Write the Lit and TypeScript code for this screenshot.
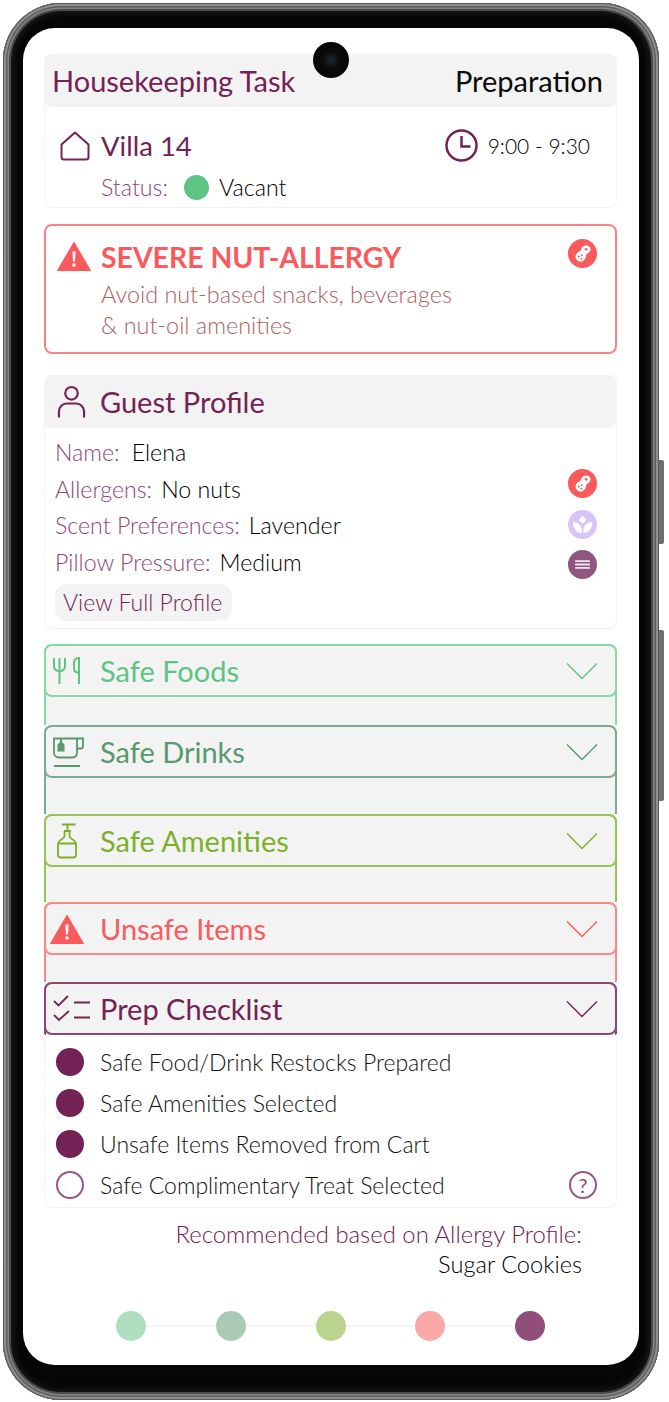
import { LitElement, html, css } from "lit";
import { customElement } from "lit/decorators.js";

const nut = (bg: string) => html`<svg class="badge" viewBox="0 0 28 28"><circle cx="14" cy="14" r="14" fill="${bg}"/><path d="M17.800 6.200c2.400 0 4 1.800 4 3.800 0 2.300-1.800 3.500-3.300 4.300-.9.500-1 1.200-1.200 2.400-.4 2.600-2 5.100-5 5.100-2.800 0-5-2.200-5-4.900 0-2.700 1.900-4.100 3.600-4.900 1.100-.5 1.600-1.200 2-2.500.6-1.900 2.400-3.300 4.900-3.300z" fill="#fff"/><circle cx="17.500" cy="10" r="1.300" fill="${bg}"/><circle cx="10.500" cy="17" r="1" fill="${bg}"/><circle cx="13" cy="19" r=".9" fill="${bg}"/><circle cx="13.300" cy="15.600" r=".9" fill="${bg}"/></svg>`;
const leaf = html`<svg class="badge" viewBox="0 0 28 28"><circle cx="14" cy="14" r="14" fill="#d8c5f7"/><path d="M13.200 22.500C8 22 4.500 17.500 4.800 11.300c3.200.3 5.800 1.600 7.300 3.800 1.300 2 1.700 4.800 1.100 7.400zM15 22.500c-.6-2.600-.2-5.400 1.100-7.400 1.500-2.200 4.100-3.500 7.300-3.800.3 6.200-3.200 10.700-8.400 11.200zM14.100 13.300c-.8-1.200-1.900-2.200-3.300-3 .4-1.700 1.500-3.200 3.300-4.700 1.800 1.500 2.900 3 3.300 4.700-1.400.8-2.500 1.800-3.300 3z" fill="#fff"/></svg>`;
const pressure = html`<svg class="badge" viewBox="0 0 28 28"><circle cx="14" cy="14" r="14" fill="#91567f"/><path d="M7.500 10.700h13M7.500 14h13M7.500 17.300h13" stroke="#f1e6ee" stroke-width="1.700" stroke-linecap="round"/></svg>`;
const warn = html`<svg class="warn" width="34" height="30" viewBox="0 0 34 30"><path d="M17 1.500 33.300 29.500H.7z" fill="#fa5a5c" stroke="#fa5a5c" stroke-width="1.200" stroke-linejoin="round"/><path d="M15.400 10.500h3.200l-.6 10h-2z" fill="#fff"/><circle cx="17" cy="24" r="1.800" fill="#fff"/></svg>`;
const chevron = (c: string) => html`<svg viewBox="0 0 32 18" width="32" height="18"><path d="M1 1.500 16 16.500 31 1.500" fill="none" stroke="${c}" stroke-width="1.400"/></svg>`;

const icons = {
  food: html`<svg width="27" height="28" viewBox="0 0 27 28" fill="none" stroke="#5ec484" stroke-width="2"><path d="M1 1v8c0 3 2 5 5.500 5S12 12 12 9V1M6.500 1v26M26 0v27M26 1c-3 0-5 2-5 5v6c0 2 1.500 3.500 5 3.500"/></svg>`,
  drink: html`<svg width="31" height="30" viewBox="0 0 31 30" fill="none" stroke="#569a6d" stroke-width="1.800"><path d="M1 1.500h23v14c0 3-2 5-5 5H6c-3 0-5-2-5-5zM24 1.500h6v8c0 1-1 2-2 2h-4M1 29h26"/><path d="M7 2v3L4.500 7.500v7h7v-7L9 5V2z" fill="#569a6d" stroke="none"/></svg>`,
  pump: html`<svg width="20" height="36" viewBox="0 0 20 36" fill="none" stroke="#7cb02b" stroke-width="1.800"><path d="M5 1.500h13.500M10.500 1.500V8M7 8h7M7.500 8v5c0 1.500-1 2-2.500 3-2.500 1.500-4 3-4 5.500V32c0 1.500 1 2.500 2.500 2.500h13c1.500 0 2.500-1 2.500-2.500V21.500c0-2.500-1.500-4-4-5.500-1.500-1-2.500-1.500-2.500-3V8M1 20.500h18"/></svg>`,
  check: html`<svg width="38" height="28" viewBox="0 0 38 28" fill="none" stroke="#732255" stroke-width="1.800"><path d="M1 6 5.500 10.500 15 1M1 20 6 25 16 16M21 7.500h16M21 22.500h16"/></svg>`,
};

@customElement("app-root")
export class AppRoot extends LitElement {
  static styles = css`
    :host { display: block; width: 669px; height: 1402px; background: #fff; font-family: "Lato", "Liberation Sans", sans-serif; overflow: hidden; }
    .device { display: flex; align-items: flex-start; padding: 3px 0 0 3px; }
    .phone { position: relative; width: 656px; height: 1397px; box-sizing: border-box; border-radius: 58px; background: #060606; padding: 25px 20px 35px 20px;
      box-shadow: inset 0 0 0 1px #5a5a5a, inset 0 0 0 3px #8f8f8f, inset 0 0 0 4.500px #5e5e5e, inset 0 0 0 6px #858585, inset 0 0 0 8px #4a4a4a, inset 0 0 6px 10px #1c1c1c; }
    .camera { position: absolute; left: 310px; top: 39px; width: 36px; height: 36px; border-radius: 50%; background: radial-gradient(circle, #1a2a30 0, #0a0a0b 35%, #050505 100%); }
    .rails { display: flex; flex-direction: column; width: 6px; }
    .rail { width: 5px; background: #6d6d6d; border-radius: 0 2px 2px 0; }
    .rail.a { height: 84px; margin-top: 457px; }
    .rail.b { height: 171px; margin-top: 86px; }
    .screen { height: 100%; box-sizing: border-box; background: #fff; border-radius: 32px; padding: 26px 22px 0 21px; width: 616px; overflow: hidden; }

    .card { display: block; border: 1px solid #f3f3f3; border-radius: 8px; box-sizing: border-box; }
    .head { background: #f3f3f3; border-radius: 8px; height: 53px; display: flex; align-items: center; justify-content: space-between; padding: 0 14px 0 8px; margin: -1px; font-size: 29px; }
    .head .t { color: #732255; }
    .head .r { color: #0b0b0b; }

    .villa { height: 101px; box-sizing: border-box; padding: 23px 26px 0 15px; }
    .villa-top { display: flex; justify-content: space-between; align-items: center; }
    .vl { display: flex; align-items: center; gap: 11px; font-size: 27.500px; color: #732255; }
    .vr { display: flex; align-items: center; gap: 10px; font-size: 21px; color: #000; font-weight: 300; }
    .status { display: flex; align-items: center; margin: 11px 0 0 41px; font-size: 23.200px; }
    .lab { color: #8f4676; font-weight: 300; }
    .val { color: #000; font-weight: 300; }
    .status .lab { margin-right: 16px; }
    .dot { width: 25px; height: 25px; border-radius: 50%; background: #5ec484; margin-right: 10px; }

    .alert { margin-top: 16px; height: 130px; box-sizing: border-box; border: 2px solid #fb8283; border-radius: 8px; padding: 12px 18px 0 11px; display: flex; justify-content: space-between; align-items: flex-start; }
    .a-main { display: flex; gap: 10px; }
    .a-main .warn { margin-top: 3px; }
    .a-title { font-size: 28.400px; font-weight: 700; color: #fa5a5c; line-height: 38px; }
    .a-sub { font-size: 23.400px; font-weight: 300; color: #b0605f; line-height: 30.500px; margin-top: 3px; }
    .alert .badge { margin-top: 1px; }
    .badge { width: 29px; height: 29px; display: block; }

    .guest { margin-top: 21px; height: 254px; }
    .ghead { justify-content: flex-start; gap: 14px; padding-left: 13px; }
    .rows { display: flex; justify-content: space-between; padding: 7px 19px 0 10px; }
    .row { display: flex; align-items: center; height: 36.500px; font-size: 23.200px; }
    .row .lab { margin-right: 9px; }
    .row.first .lab { margin-right: 12px; }
    .badges { display: flex; flex-direction: column; gap: 11.500px; margin-top: 35px; }
    .btn { display: inline-block; background: #f3f3f3; color: #732255; font-size: 23px; font-weight: 300; border-radius: 12px; padding: 3px 10px 4px 8px; line-height: 30px; margin-top: 4px; }

    .acc { margin-top: 15px; }
    .item { box-sizing: border-box; border-left: 2px solid var(--c); border-right: 2px solid var(--c); background: #f3f3f3; border-radius: 8px 8px 0 0; }
    .bar { box-sizing: border-box; height: 53px; margin: 0 -2px; border: 2px solid var(--c); border-radius: 8px; display: flex; align-items: center; padding: 0 17px 0 0; background: #f3f3f3; font-size: 29px; color: var(--t); }
    .ic { width: 54px; box-sizing: border-box; display: flex; flex: none; }
    .lbl { flex: 1; }

    .list { margin-top: -1px; height: 174px; border-top: 0; padding: 7px 19px 0 11px; box-sizing: border-box; border-radius: 0 0 8px 8px; }
    .li { display: flex; align-items: center; height: 41px; font-size: 23px; color: #111; font-weight: 300; }
    .radio { width: 28px; height: 28px; border-radius: 50%; background: #732255; margin-right: 16px; flex: none; box-sizing: border-box; }
    .radio.off { background: #fff; border: 2px solid #9a5585; }
    .txt { flex: 1; }
    .help { width: 28px; height: 28px; box-sizing: border-box; border-radius: 50%; border: 2px solid #9a5585; color: #8f4376; font-size: 20px; font-weight: 400; display: flex; align-items: center; justify-content: center; }

    .rec { text-align: right; padding-right: 35px; margin-top: 10px; font-size: 23.900px; font-weight: 300; line-height: 31px; color: #73184f; }
    .rec .sug { color: #000; font-size: 23.600px; }
    .steps { display: flex; align-items: center; margin: 31px 72px 0; }
    .step { width: 30px; height: 30px; border-radius: 50%; flex: none; }
    .ln { flex: 1; height: 2px; background: #f5f5f5; }
  `;

  private acc(label: string, c: string, t: string, icon: unknown, pad: number, h: number) {
    return html`<div class="item" style="--c:${c};--t:${t};height:${h}px"><div class="bar"><span class="ic" style="padding-left:${pad}px">${icon}</span><span class="lbl">${label}</span>${chevron(t)}</div></div>`;
  }

  render() {
    return html`<div class="device">
      <div class="phone">
        <div class="camera"></div>
        <div class="screen">
          <section class="card">
            <div class="head"><span class="t">Housekeeping Task</span><span class="r">Preparation</span></div>
            <div class="villa">
              <div class="villa-top">
                <div class="vl"><svg width="30" height="30" viewBox="0 0 30 30" fill="none" stroke="#732255" stroke-width="2"><path d="M15 1.500 1.500 13.500V26c0 1.500 1 2.500 2.500 2.500h22c1.500 0 2.500-1 2.500-2.500V13.500z" stroke-linejoin="round"/></svg><span>Villa 14</span></div>
                <div class="vr"><svg width="33" height="33" viewBox="0 0 33 33" fill="none" stroke="#732255" stroke-width="2.500"><circle cx="16.500" cy="16.500" r="15"/><path d="M16.500 7v10.500h9"/></svg><span>9:00 - 9:30</span></div>
              </div>
              <div class="status"><span class="lab">Status:</span><span class="dot"></span><span class="val">Vacant</span></div>
            </div>
          </section>

          <section class="alert">
            <div class="a-main">
              ${warn}
              <div>
                <div class="a-title">SEVERE NUT-ALLERGY</div>
                <div class="a-sub">Avoid nut-based snacks, beverages<br />&amp; nut-oil amenities</div>
              </div>
            </div>
            ${nut("#fa5a5c")}
          </section>

          <section class="card guest">
            <div class="head ghead"><svg width="29" height="34" viewBox="0 0 30 34" fill="none" stroke="#732255" stroke-width="2.200"><circle cx="15" cy="8" r="6.500"/><path d="M2 33v-6c0-5 4-8.500 8-8.500h10c4 0 8 3.500 8 8.500v6"/></svg><span class="t">Guest Profile</span></div>
            <div class="rows">
              <div>
                <div class="row first"><span class="lab">Name:</span><span class="val">Elena</span></div>
                <div class="row"><span class="lab">Allergens:</span><span class="val">No nuts</span></div>
                <div class="row"><span class="lab">Scent Preferences:</span><span class="val">Lavender</span></div>
                <div class="row"><span class="lab">Pillow Pressure:</span><span class="val">Medium</span></div>
                <span class="btn">View Full Profile</span>
              </div>
              <div class="badges">${nut("#fa5a5c")}${leaf}${pressure}</div>
            </div>
          </section>

          <div class="acc">
            ${this.acc("Safe Foods", "#8ad6a6", "#5ec484", icons.food, 7, 81)}
            ${this.acc("Safe Drinks", "#7eab8e", "#569a6d", icons.drink, 7, 89)}
            ${this.acc("Safe Amenities", "#99c259", "#7cb02b", icons.pump, 11, 88)}
            ${this.acc("Unsafe Items", "#fb8889", "#fa5a5c", warn, 4, 80)}
            ${this.acc("Prep Checklist", "#874a72", "#732255", icons.check, 7, 53)}
          </div>

          <section class="card list">
            <div class="li"><span class="radio"></span><span class="txt">Safe Food/Drink Restocks Prepared</span></div>
            <div class="li"><span class="radio"></span><span class="txt">Safe Amenities Selected</span></div>
            <div class="li"><span class="radio"></span><span class="txt">Unsafe Items Removed from Cart</span></div>
            <div class="li"><span class="radio off"></span><span class="txt">Safe Complimentary Treat Selected</span><span class="help">?</span></div>
          </section>

          <div class="rec"><div>Recommended based on Allergy Profile:</div><div class="sug">Sugar Cookies</div></div>

          <div class="steps">
            <span class="step" style="background:#aee0c0"></span><span class="ln"></span>
            <span class="step" style="background:#abcab5"></span><span class="ln"></span>
            <span class="step" style="background:#bbd48d"></span><span class="ln"></span>
            <span class="step" style="background:#fca8a8"></span><span class="ln"></span>
            <span class="step" style="background:#8f4f78"></span>
          </div>
        </div>
      </div>
      <div class="rails"><div class="rail a"></div><div class="rail b"></div></div>
    </div>`;
  }
}
